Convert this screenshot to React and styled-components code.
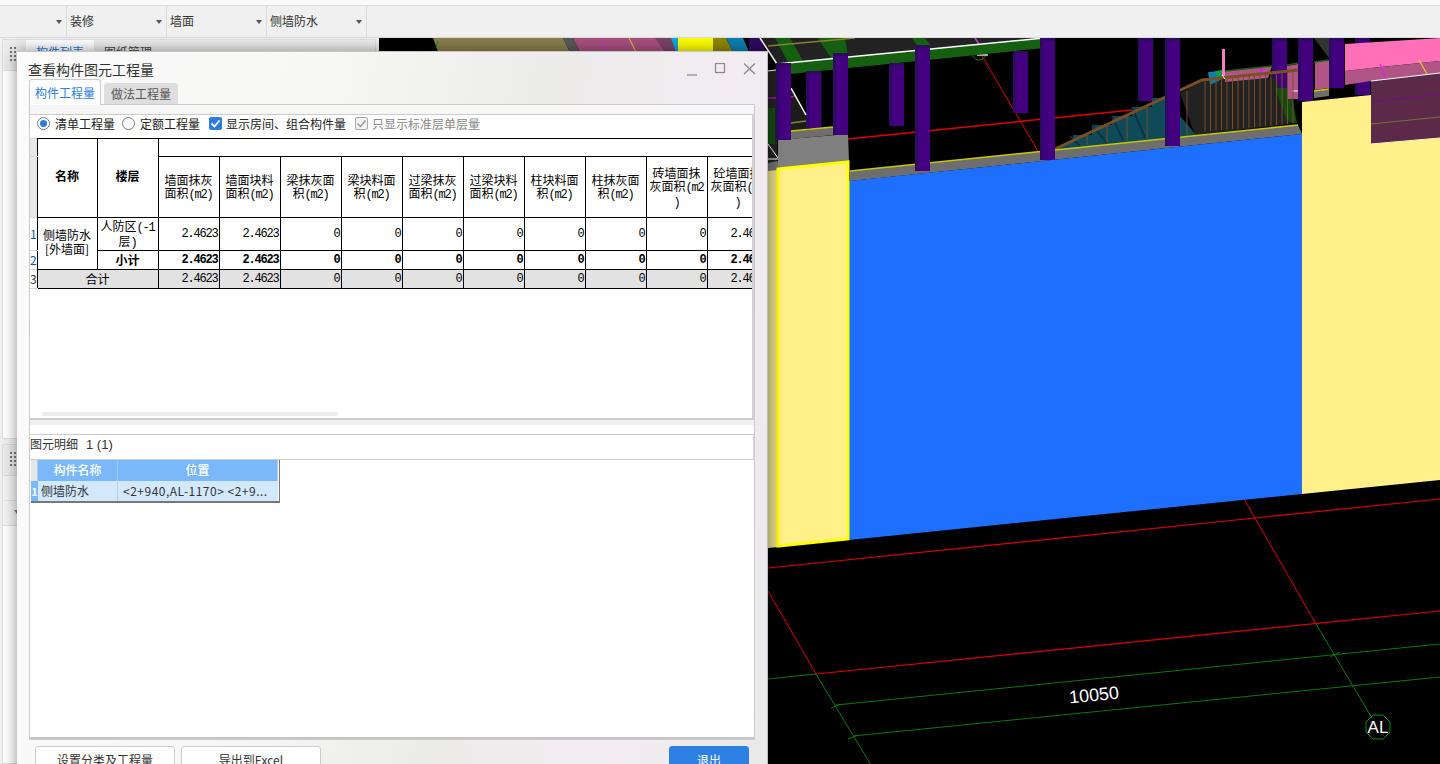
import React from "react";
import styled, { createGlobalStyle } from "styled-components";

const CJK = `"Noto Sans CJK SC", "Noto Sans", sans-serif`;
const MONO = `"Liberation Mono", "Noto Sans CJK SC", monospace`;

const Global = createGlobalStyle`
  html, body { margin: 0; padding: 0; background: #f0f0f0; }
  body { font-family: ${CJK}; font-size: 12px; color: #222; }
`;

const Root = styled.div`
  position: relative; width: 1440px; height: 764px; overflow: hidden;
  display: flex; flex-direction: column;
`;
const TopStrip = styled.div`height: 5px; background: #fafafa; border-bottom: 1px solid #dcdcdc;`;
const Toolbar = styled.div`
  height: 31px; display: flex; background: #f0f0f0; border-bottom: 1px solid #dcdcdc;
`;
const Drop = styled.div`
  position: relative; width: ${p => p.$w}px; border-right: 1px solid #dcdcdc;
  padding-left: 3px; line-height: 30px; color: #333; box-sizing: content-box;
  &::after {
    content: ""; position: absolute; right: 4px; top: 14px;
    border: 3px solid transparent; border-top: 4px solid #555; border-bottom: 0;
  }
`;
const Main = styled.div`flex: 1; display: flex; min-height: 0;`;
const Side = styled.div`
  width: 379px; flex: none; background: #f0f0f0; padding: 1px 3px 0 2px; box-sizing: border-box;
  display: flex; flex-direction: column; gap: 5px;
`;
const Card = styled.div`
  height: ${p => p.$h}px; flex: ${p => (p.$grow ? 1 : "none")}; background: #fff; border: 1px solid #dedede;
  box-sizing: border-box;
`;
const CardHead = styled.div`
  height: 30px; display: flex; background: #ececec; border-bottom: 1px solid #dedede; padding-left: 6px;
`;
const Grip = styled.div`
  width: 7px; height: 15px; margin: 6px 0 0 0; flex: none;
  background-image: radial-gradient(circle, #777 1.2px, transparent 1.4px);
  background-size: 4px 4px;
`;
const SideTab = styled.div`
  margin-left: ${p => p.$ml || 0}px; padding: 0 10px; line-height: 24px; height: 24px;
  color: ${p => (p.$on ? "#2b7de0" : "#444")}; background: ${p => (p.$on ? "#fff" : "transparent")};
`;
const SubRow = styled.div`
  height: 24px; border-bottom: 1px solid #e4e4e4; background: #f4f4f4; position: relative;
  &::after {
    content: ""; position: absolute; left: 11px; top: 9px;
    border: 3px solid transparent; border-top: ${p => (p.$arrow ? "4px solid #777" : "0")}; border-bottom: 0;
  }
`;
const View = styled.div`flex: 1; background: #000; min-width: 0;`;
const SceneSvg = styled.svg`display: block; width: 1061px; height: 727px;`;

const Dialog = styled.div`
  position: absolute; left: 17px; top: 51px; width: 751px; height: 740px;
  box-sizing: border-box; padding: 0 12px; display: flex; flex-direction: column;
  background: linear-gradient(100deg, #fbfbfb 0%, #f7f7f6 35%, #ececea 60%, #f2ecf1 82%, #e9e9ea 100%);
  border-right: 1px solid #bdbdbd; border-top: 1px solid #c6c6c6;
  box-shadow: 0 0 14px rgba(0,0,0,.45);
`;
const TitleBar = styled.div`
  height: 27px; display: flex; align-items: center; justify-content: space-between; flex: none;
`;
const Title = styled.div`font-size: 14px; color: #333; margin-left: -1px; padding-top: 6px;`;
const WinBtns = styled.div`display: flex; gap: 0; margin: 8px -1px 0 0; color: #888;`;
const WinSvg = styled.svg`display: block; width: ${p => p.$w || 30}px; height: 14px;`;
const Tabs = styled.div`height: 25px; display: flex; flex: none; align-items: flex-end; gap: 3px; position: relative; z-index: 1;`;
const Tab = styled.div`
  height: ${p => (p.$on ? 26 : 21)}px; line-height: ${p => (p.$on ? 26 : 21)}px; box-sizing: border-box;
  border-radius: 3px 3px 0 0; white-space: nowrap;
  background: ${p => (p.$on ? "#fff" : "#dedede")}; color: ${p => (p.$on ? "#2b7de0" : "#555")};
  border: ${p => (p.$on ? "1px solid #ccc" : "0")}; border-bottom: 0;
  ${p => (p.$on ? "margin-bottom: -1px; padding: 0 5px;" : "padding: 0 7px 0 7px;")}
`;
const Pane = styled.div`
  flex: none; height: 636px; border: 1px solid #ccc; box-sizing: border-box;
  display: flex; flex-direction: column; width: 726px; padding-top: 9px; background: linear-gradient(#f6f6f6 9px, #fff 9px);
`;
const QtyPanel = styled.div`
  height: 306px; flex: none; background: #fff; position: relative; border-top: 1px solid #ccc;
  border-bottom: 2px solid #ccc; border-right: 2px solid #d2d2d2; box-sizing: border-box; overflow: hidden;
`;
const Options = styled.div`
  height: 23px; display: flex; align-items: center; padding: 0 0 7px 7px; box-sizing: border-box; color: #222; white-space: nowrap;
`;
const Radio = styled.span`
  width: 13px; height: 13px; border-radius: 50%; border: 1px solid #777; box-sizing: border-box; background: #fff;
  display: inline-flex; align-items: center; justify-content: center; margin-right: 5px; flex: none;
  &::after { content: ""; width: 7px; height: 7px; border-radius: 50%; background: ${p => (p.$on ? "#2b7de0" : "transparent")}; }
`;
const Check = styled.span`
  width: 13px; height: 13px; border-radius: 2px; box-sizing: border-box; flex: none; margin-right: 4px;
  display: inline-flex; align-items: center; justify-content: center;
  background: ${p => (p.$off ? "#f2f2f2" : "#2b7de0")}; border: 1px solid ${p => (p.$off ? "#aaa" : "#2b7de0")};
  color: ${p => (p.$off ? "#999" : "#fff")};
`;
const OptLabel = styled.span`margin-right: ${p => p.$mr}px; color: ${p => (p.$off ? "#8a8a8a" : "#222")};`;

const GridClip = styled.div`width: 724px; overflow: hidden;`;
const Table = styled.table`
  border-collapse: collapse; table-layout: fixed; width: 738px; font-size: 12px; color: #000;
  td, th { padding: 0; overflow: hidden; }
`;
const RowHead = styled.td`
  background: ${p => (p.$head ? "#e8e8e8" : "#fff")}; color: ${p => p.$c || "#0a5aa0"}; text-align: left;
  border: 1px solid #d8d8d8; border-left: 0; border-right: 1px solid #000; font-size: 12px; line-height: 12px;
`;
const Cell = styled.td`
  border: 1px solid #000; text-align: ${p => p.$align || "center"}; vertical-align: middle;
  height: ${p => p.$h || "auto"}; line-height: ${p => p.$lh || 14}px; white-space: nowrap;
  font-weight: ${p => (p.$bold ? 700 : 400)}; background: ${p => (p.$grey ? "#e2e2e2" : "#fff")};
`;
const NameCell = styled(Cell)`padding-bottom: 4px !important;`;
const NumCell = styled(Cell)`
  text-align: right; padding-right: 1px !important; font-family: ${MONO}; letter-spacing: -1.2px;
`;
const Latin = styled.span`font-family: ${MONO}; letter-spacing: -1.2px; line-height: 1; font-size: 12px;`;
const ScrollThumb = styled.div`
  position: absolute; left: 12px; top: 297px; width: 296px; height: 4px; border-radius: 2px; background: #ececec;
`;
const Gap = styled.div`height: 14px; flex: none; background: linear-gradient(#f0f0f0 5px, #fff 5px);`;
const DetailHead = styled.div`
  height: 24px; flex: none; line-height: 17px; border-top: 1px solid #ccc; color: #333; border-right: 1px solid #d8d8d8;
`;
const DetailCount = styled.span`margin-left: 8px; font-family: "Liberation Sans", sans-serif; font-size: 13px;`;
const DetailBody = styled.div`
  flex: 1; border-top: 1px solid #ccc; border-bottom: 2px solid #c4c4c4; padding-left: 1px;
`;
const DetailGrid = styled.div`
  width: 248px; display: grid; grid-template-columns: 7px 80px 160px; grid-template-rows: 21px 20px;
  border-right: 1px solid #777; border-bottom: 2px solid #777; font-size: 12px;
`;
const GHead = styled.div`
  background: ${p => (p.$corner ? "#e6e6e6" : "#7ab8fa")}; color: #fff; text-align: center; line-height: 20px; font-weight: 500;
  border-right: 1px solid #a6cdf8;
`;
const GRowNo = styled.div`background: #7ab8fa; color: #fff; font-weight: 700; font-size: 11px; line-height: 20px; text-align: center;`;
const GCell = styled.div`
  background: #d2e8fc; color: #333; line-height: 20px; padding-left: ${p => p.$pl}px; white-space: nowrap; overflow: hidden;
  border-right: ${p => (p.$line ? "1px solid #c4cfd8" : "0")}; letter-spacing: ${p => p.$ls || 0};
`;
const Foot = styled.div`
  flex: none; display: flex; gap: 6px; padding: 6px 6px 0 6px; width: 726px; box-sizing: border-box;
`;
const Btn = styled.div`
  width: ${p => p.$w}px; height: 32px; line-height: 26px; text-align: center; box-sizing: border-box; border-radius: 3px;
  margin-left: ${p => (p.$push ? "auto" : 0)};
  background: ${p => (p.$primary ? "#2f80e4" : "#fff")}; color: ${p => (p.$primary ? "#fff" : "#333")};
  border: 1px solid ${p => (p.$primary ? "#2f80e4" : "#ccc")};
`;
const SceneText = styled.text.attrs(p => ({ textAnchor: "middle", fontSize: p.$size }))`
  fill: #fff; font-family: "Liberation Sans", sans-serif;
`;

/* ---------- data ---------- */
const cols = [
  ["墙面抹灰", "面积(m2)"], ["墙面块料", "面积(m2)"], ["梁抹灰面", "积(m2)"], ["梁块料面", "积(m2)"],
  ["过梁抹灰", "面积(m2)"], ["过梁块料", "面积(m2)"], ["柱块料面", "积(m2)"], ["柱抹灰面", "积(m2)"],
  ["砖墙面抹", "灰面积(m2", ")"], ["砼墙面抹", "灰面积(m2", ")"],
];
const vals = ["2.4623", "2.4623", "0", "0", "0", "0", "0", "0", "0", "2.4623"];

const withLatin = (s) => {
  const i = s.indexOf("(");
  if (i >= 0) return <>{s.slice(0, i)}<Latin>{s.slice(i)}</Latin></>;
  if (s === ")") return <Latin>{s}</Latin>;
  return s;
};

/* ---------- 3D view drawing ---------- */
const baseY = (x) => 170 - ((x - 850) * 46) / 448;
const railY = (x) => (x < 1202 ? 148 - ((x - 1055) * 69) / 147 : 79 - ((x - 1202) * 10) / 96);
const farCols = [[806, 70, 127], [889, 62, 125], [1013, 50, 112], [1138, 37, 100], [1272, 37, 87], [1329, 37, 87]];
const nearCols = [[776, 62, 139], [833, 52, 134], [915, 44, 170], [1040, 37, 159], [1165, 37, 145], [1298, 37, 100], [1355, 37, 94]];
const stairBal = [1087, 1107, 1127, 1147, 1187];
const upperBal = Array.from({ length: 17 }, (_, i) => 1205 + i * 5.5);

function Column({ c }) {
  const [x, t, b] = c;
  return (
    <g>
      <rect x={x} y={t} width={15} height={b - t} fill="#43007f" />
      <rect x={x} y={t} width={3} height={b - t} fill="#2e0a62" />
      <rect x={x} y={t} width={15} height={3} fill="#2e0a62" />
    </g>
  );
}

function Scene() {
  return (
    <SceneSvg viewBox="379 37 1061 727">
      <rect x="379" y="37" width="1061" height="727" fill="#000" />
      {/* strip visible above the dialog */}
      <polygon points="433,37 563,37 570,51 438,51" fill="#8a7f4c" />
      <polygon points="563,37 573,37 580,51 570,51" fill="#5a5a5a" />
      <polygon points="573,37 671,37 677,51 580,51" fill="#a8507f" />
      <polygon points="655,37 671,37 677,51 665,51" fill="#7a4468" />
      <line x1="601" y1="37" x2="607" y2="51" stroke="#e020e0" strokeWidth="1" />
      <line x1="629" y1="37" x2="636" y2="51" stroke="#e0d020" strokeWidth="1" />
      <polygon points="671,37 678,37 678,51 676,51" fill="#10a8e0" />
      <rect x="678" y="37" width="35" height="14" fill="#ffff00" />
      <polygon points="713,37 726,37 733,51 713,51" fill="#908800" />
      <polygon points="726,37 743,37 749,51 733,51" fill="#0a80b0" />
      <polygon points="749,37 760,37 766,51 749,51" fill="#2e0a62" />
      <line x1="438" y1="40" x2="436" y2="47" stroke="#0a8a0a" strokeWidth="1" />

      {/* dark structure left of the first column */}
      <rect x="768" y="70" width="9" height="95" fill="#222" />
      <rect x="768" y="107" width="7" height="36" fill="#154a10" />
      <line x1="768" y1="97" x2="776" y2="97" stroke="#9a1a9a" strokeWidth="1.5" />
      <line x1="768" y1="70" x2="776" y2="69" stroke="#fff" strokeWidth="1" />
      <polygon points="791,87 806,114 806,130 791,130" fill="#1c1c1c" />
      <line x1="791" y1="96" x2="795" y2="95" stroke="#9a1a9a" strokeWidth="1.5" />
      <line x1="791" y1="122" x2="806" y2="120" stroke="#8a8030" strokeWidth="1.5" />

      {/* roof and green beam */}
      <circle cx="979" cy="52" r="7" fill="none" stroke="#0a8a0a" strokeWidth="1" />
      <line x1="977" y1="54" x2="988" y2="54" stroke="#ddd" strokeWidth="1.5" />
      <polygon points="760,37 1044,37 777,63" fill="#222" />
      <polygon points="775,37 790,37 803,60 788,61" fill="#156010" />
      <polygon points="818,37 845,37 848,55 831,57" fill="#156010" />
      <polygon points="912,37 925,37 931,45 918,46" fill="#156010" />
      <line x1="768" y1="45" x2="855" y2="37" stroke="#8a8030" strokeWidth="1.5" />
      <polygon points="777,63 1044,37 1044,47 790,73" fill="#156010" />
      <line x1="975" y1="37" x2="979" y2="43" stroke="#c040c0" strokeWidth="1.5" />

      {/* red grid lines in the pit */}
      <line x1="848" y1="138" x2="1132" y2="109" stroke="#e00000" strokeWidth="1.5" />
      <line x1="982" y1="55" x2="1038" y2="150" stroke="#e00000" strokeWidth="1" />

      {/* far columns */}
      {farCols.map((c) => <Column key={c[0]} c={c} />)}

      {/* white edges left */}
      <line x1="760" y1="37" x2="777" y2="63" stroke="#fff" strokeWidth="1.5" />
      <line x1="791" y1="87" x2="806" y2="114" stroke="#fff" strokeWidth="1.5" />
      <line x1="768" y1="143" x2="778" y2="157" stroke="#fff" strokeWidth="1" />
      <line x1="768" y1="158" x2="778" y2="158" stroke="#fff" strokeWidth="1" />
      <line x1="777" y1="63" x2="1044" y2="37" stroke="#fff" strokeWidth="1.5" />

      {/* ledge between first columns */}
      <polygon points="791,130 833,126 833,134 791,138" fill="#6e6e6e" />
      <line x1="791" y1="130" x2="833" y2="126" stroke="#c8c800" strokeWidth="1.5" />
      <polygon points="778,139 848,133 849,161 778,169" fill="#808080" />
      <polygon points="768,162 778,160 778,170 768,171" fill="#6e6e6e" />

      {/* stairs */}
      <polygon
        points="1055,147 1073,139 1073,134 1092,134 1092,124 1112,124 1112,115 1132,115 1132,106 1152,106 1152,97 1165,97 1196,134 1055,150"
        fill="#0f4a58"
      />
      <path d="M1070 135 L1080 145 M1092 124 L1107 142 M1112 115 L1123 139 M1132 106 L1145 137" stroke="#0a3540" strokeWidth="2" fill="none" />
      <polygon points="1180,92 1203,79 1275,77 1297,122 1195,134" fill="#222" />
      <polygon points="1275,87 1290,87 1297,122 1287,120" fill="#154a10" />

      {/* upper landing */}
      <polygon points="1225,70 1272,65 1268,77 1225,81" fill="#b05585" />
      <line x1="1225" y1="70" x2="1272" y2="65" stroke="#156010" strokeWidth="1.5" />
      <rect x="1222" y="48" width="3" height="27" fill="#f080c0" />
      <polygon points="1208,71 1222,70 1222,78 1210,84" fill="#0a80b0" />
      <polygon points="1215,70 1222,69 1222,77 1218,78" fill="#1a9a40" />
      <rect x="1260" y="67" width="3" height="4" fill="#e020e0" />
      <polygon points="1287,65 1298,63 1298,98 1287,98" fill="#b05585" />
      <line x1="1287" y1="64" x2="1298" y2="62" stroke="#156010" strokeWidth="1.5" />
      <line x1="1292" y1="90" x2="1299" y2="90" stroke="#fff" strokeWidth="1" />
      <polygon points="1315,61 1329,59 1329,87 1315,89" fill="#b05585" />
      <line x1="1314" y1="61" x2="1329" y2="59" stroke="#156010" strokeWidth="1.5" />
      <polygon points="1314,37 1329,37 1329,57" fill="#333" />
      <polygon points="1314,90 1329,88 1329,95 1314,97" fill="#6e6e6e" />
      <line x1="1314" y1="90" x2="1329" y2="88" stroke="#c8c800" strokeWidth="1.5" />

      {/* railings */}
      {stairBal.map((x) => (
        <line key={x} x1={x} y1={x < 1180 ? railY(x) : 90} x2={x} y2={baseY(x) - 2} stroke="#7a4f25" strokeWidth="1" />
      ))}
      {upperBal.map((x) => (
        <line key={x} x1={x} y1={railY(x)} x2={x} y2={130.5 - (x - 1205) * 0.09} stroke="#7a4f25" strokeWidth="1" />
      ))}
      <polyline points="1055,148 1202,79 1298,69" fill="none" stroke="#7a4f25" strokeWidth="3" />
      <line x1="1222" y1="74" x2="1225" y2="78" stroke="#fff" strokeWidth="1" />

      {/* grey ledge above the blue wall */}
      <polygon points="850,170 1298,124 1302,133 850,180" fill="#6e6e6e" />
      <line x1="850" y1="170" x2="1298" y2="124" stroke="#c8c800" strokeWidth="1.5" />

      {/* near columns */}
      {nearCols.map((c) => <Column key={c[0]} c={c} />)}

      {/* blue wall */}
      <polygon points="849,180 1302,133 1302,493 849,539" fill="#1f6fff" />

      {/* left yellow pillar */}
      <polygon points="768,170 778,169 778,546 768,547" fill="#e4d987" />
      <polygon points="778,168 848,161 848,538 778,545" fill="#fff08a" stroke="#ffff00" strokeWidth="3" />

      {/* right wall block */}
      <polygon points="1345,43 1440,37 1440,60 1371,67 1345,70" fill="#ff70b8" />
      <polygon points="1345,70 1371,67 1440,60 1440,72 1371,80 1345,84" fill="#b05585" />
      <line x1="1380" y1="63" x2="1386" y2="78" stroke="#e020e0" strokeWidth="1.2" />
      <line x1="1419" y1="59" x2="1427" y2="73" stroke="#e0d020" strokeWidth="1.2" />
      <polygon points="1371,80 1440,72 1440,137 1371,143" fill="#5a2a48" />
      <line x1="1371" y1="80" x2="1440" y2="72" stroke="#fff" strokeWidth="1" />
      <line x1="1371" y1="143" x2="1440" y2="137" stroke="#fff" strokeWidth="1" />
      <line x1="1371" y1="101" x2="1440" y2="93" stroke="#7a0a8a" strokeWidth="1.2" />
      <line x1="1371" y1="123" x2="1440" y2="116" stroke="#7a7030" strokeWidth="1.2" />
      <polygon points="1302,101 1371,94 1371,143 1440,137 1440,479 1302,493" fill="#fff08a" />

      {/* ground grid */}
      <g fill="none" strokeWidth="1">
        <line x1="768" y1="567" x2="1440" y2="498" stroke="#e00000" strokeWidth="1.2" />
        <line x1="1244" y1="498" x2="1316" y2="623" stroke="#e00000" />
        <line x1="816" y1="673" x2="1440" y2="610" stroke="#e00000" strokeWidth="1.2" />
        <line x1="768" y1="590" x2="816" y2="673" stroke="#e00000" />
        <line x1="768" y1="678" x2="816" y2="673" stroke="#0a7a0a" />
        <line x1="836" y1="704" x2="1440" y2="643" stroke="#0a7a0a" />
        <line x1="853" y1="735" x2="1440" y2="676" stroke="#0a7a0a" />
        <line x1="816" y1="673" x2="871" y2="764" stroke="#0a7a0a" />
        <line x1="1316" y1="623" x2="1372" y2="717" stroke="#0a7a0a" />
        <line x1="831" y1="707" x2="841" y2="703" stroke="#0a7a0a" />
        <line x1="848" y1="738" x2="858" y2="734" stroke="#0a7a0a" />
        <line x1="1330" y1="656" x2="1340" y2="651" stroke="#0a7a0a" />
        <polygon points="1373,714 1383,714 1390,721 1390,731 1383,738 1373,738 1366,731 1366,721" stroke="#0a8a0a" />
      </g>
      <SceneText x="1094" y="700" $size={18} transform="rotate(-6 1094 694)">10050</SceneText>
      <SceneText x="1378" y="732" $size={17}>AL</SceneText>
    </SceneSvg>
  );
}

export default function App() {
  return (
    <Root>
      <Global />
      <TopStrip />
      <Toolbar>
        <Drop $w={63} />
        <Drop $w={96}>装修</Drop>
        <Drop $w={96}>墙面</Drop>
        <Drop $w={96}>侧墙防水</Drop>
      </Toolbar>
      <Main>
        <Side>
          <Card $h={400}>
            <CardHead>
              <Grip />
              <SideTab $on $ml={10}>构件列表</SideTab>
              <SideTab>图纸管理</SideTab>
            </CardHead>
          </Card>
          <Card $grow>
            <CardHead><Grip /></CardHead>
            <SubRow />
            <SubRow $arrow />
          </Card>
        </Side>
        <View><Scene /></View>
      </Main>

      <Dialog>
        <TitleBar>
          <Title>查看构件图元工程量</Title>
          <WinBtns>
            <WinSvg viewBox="0 0 30 14"><line x1="5" y1="12" x2="15" y2="12" stroke="currentColor" strokeWidth="1.2" /></WinSvg>
            <WinSvg viewBox="0 0 30 14"><rect x="3.5" y="0.5" width="9" height="9" fill="none" stroke="currentColor" strokeWidth="1.2" /></WinSvg>
            <WinSvg $w={14} viewBox="0 0 14 14"><path d="M2 0.5 L13 11 M13 0.5 L2 11" stroke="currentColor" strokeWidth="1.2" fill="none" /></WinSvg>
          </WinBtns>
        </TitleBar>
        <Tabs>
          <Tab $on>构件工程量</Tab>
          <Tab>做法工程量</Tab>
        </Tabs>
        <Pane>
          <QtyPanel>
            <Options>
              <Radio $on /><OptLabel $mr={7}>清单工程量</OptLabel>
              <Radio /><OptLabel $mr={9}>定额工程量</OptLabel>
              <Check><svg width="11" height="11" viewBox="0 0 11 11"><path d="M1.5 5.5 L4.5 8.5 L9.5 2.5" stroke="currentColor" strokeWidth="1.8" fill="none" /></svg></Check>
              <OptLabel $mr={9}>显示房间、组合构件量</OptLabel>
              <Check $off><svg width="11" height="11" viewBox="0 0 11 11"><path d="M1.5 5.5 L4.5 8.5 L9.5 2.5" stroke="currentColor" strokeWidth="1.4" fill="none" /></svg></Check>
              <OptLabel $mr={0} $off>只显示标准层单层量</OptLabel>
            </Options>
            <GridClip>
              <Table>
                <colgroup>
                  <col style={{ width: 7 }} />
                  <col style={{ width: 60 }} />
                  <col style={{ width: 61 }} />
                  {cols.map((_, i) => <col key={i} style={{ width: 61 }} />)}
                </colgroup>
                <tbody>
                  <tr>
                    <RowHead $head />
                    <NameCell as="th" rowSpan={2} $bold>名称</NameCell>
                    <NameCell as="th" rowSpan={2} $bold>楼层</NameCell>
                    <Cell colSpan={10} $h="17px" />
                  </tr>
                  <tr>
                    <RowHead $head />
                    {cols.map((lines, i) => (
                      <Cell key={i} $h="60px" $lh={13}>
                        {lines.map((l, j) => <div key={j}>{withLatin(l)}</div>)}
                      </Cell>
                    ))}
                  </tr>
                  <tr>
                    <RowHead>1</RowHead>
                    <NameCell rowSpan={2} $lh={14}>侧墙防水<br />[外墙面]</NameCell>
                    <Cell $h="32px" $lh={13}><div>人防区<Latin>(-1</Latin></div><div>层<Latin>)</Latin></div></Cell>
                    {vals.map((v, i) => <NumCell key={i}>{v}</NumCell>)}
                  </tr>
                  <tr>
                    <RowHead>2</RowHead>
                    <Cell $h="18px" $bold>小计</Cell>
                    {vals.map((v, i) => <NumCell key={i} $bold>{v}</NumCell>)}
                  </tr>
                  <tr>
                    <RowHead $c="#333">3</RowHead>
                    <Cell colSpan={2} $h="18px" $grey>合计</Cell>
                    {vals.map((v, i) => <NumCell key={i} $grey>{v}</NumCell>)}
                  </tr>
                </tbody>
              </Table>
            </GridClip>
            <ScrollThumb />
          </QtyPanel>
          <Gap />
          <DetailHead>图元明细<DetailCount>1 (1)</DetailCount></DetailHead>
          <DetailBody>
            <DetailGrid>
              <GHead $corner />
              <GHead>构件名称</GHead>
              <GHead>位置</GHead>
              <GRowNo>1</GRowNo>
              <GCell $pl={3} $line>侧墙防水</GCell>
              <GCell $pl={5} $ls="0.5px">&lt;2+940,AL-1170&gt; &lt;2+9...</GCell>
            </DetailGrid>
          </DetailBody>
        </Pane>
        <Foot>
          <Btn $w={140}>设置分类及工程量</Btn>
          <Btn $w={140}>导出到Excel</Btn>
          <Btn $w={80} $primary $push>退出</Btn>
        </Foot>
      </Dialog>
    </Root>
  );
}
